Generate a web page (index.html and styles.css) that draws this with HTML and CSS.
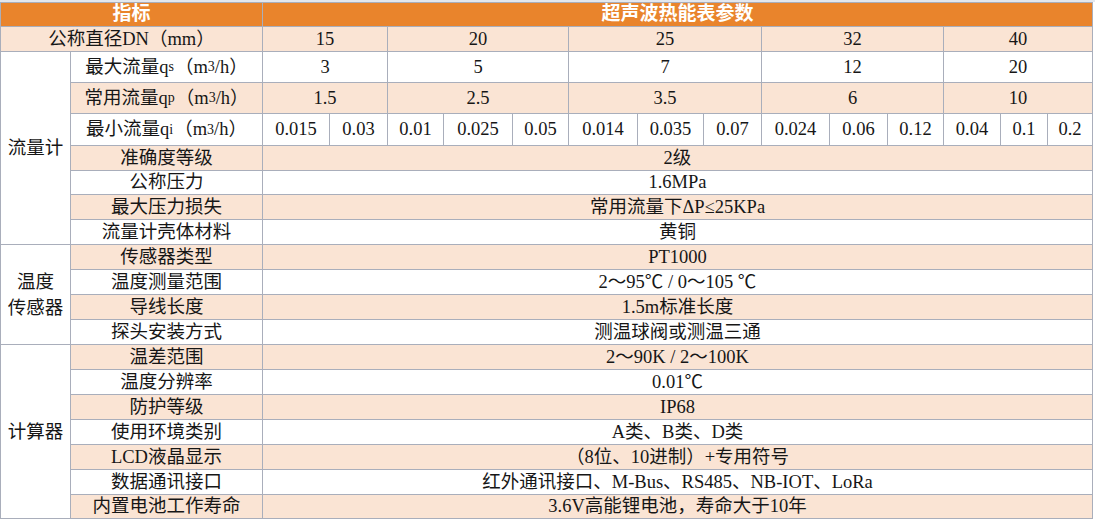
FILE: index.html
```html
<!DOCTYPE html>
<html lang="zh-CN">
<head>
<meta charset="utf-8">
<title>超声波热能表参数</title>
<link rel="stylesheet" href="styles.css">
</head>
<body>
<div class="sheet-top"></div>
<div class="sheet">
  <div class="cell head lab-full">指标</div>
  <div class="cell head val-full">超声波热能表参数</div>

  <div class="cell peach lab-full">公称直径DN（mm）</div>
  <div class="cell peach s2">15</div>
  <div class="cell peach s3">20</div>
  <div class="cell peach s3">25</div>
  <div class="cell peach s3">32</div>
  <div class="cell peach s3">40</div>

  <div class="cell grp span7">流量计</div>
  <div class="cell lab">最大流量q<sub>s</sub>（m<sup>3</sup>/h）</div>
  <div class="cell s2">3</div>
  <div class="cell s3">5</div>
  <div class="cell s3">7</div>
  <div class="cell s3">12</div>
  <div class="cell s3">20</div>

  <div class="cell peach lab">常用流量q<sub>p</sub>（m<sup>3</sup>/h）</div>
  <div class="cell peach s2">1.5</div>
  <div class="cell peach s3">2.5</div>
  <div class="cell peach s3">3.5</div>
  <div class="cell peach s3">6</div>
  <div class="cell peach s3">10</div>

  <div class="cell lab">最小流量q<sub>i</sub>（m<sup>3</sup>/h）</div>
  <div class="cell">0.015</div>
  <div class="cell">0.03</div>
  <div class="cell">0.01</div>
  <div class="cell">0.025</div>
  <div class="cell">0.05</div>
  <div class="cell">0.014</div>
  <div class="cell">0.035</div>
  <div class="cell">0.07</div>
  <div class="cell">0.024</div>
  <div class="cell">0.06</div>
  <div class="cell">0.12</div>
  <div class="cell">0.04</div>
  <div class="cell">0.1</div>
  <div class="cell">0.2</div>

  <div class="cell peach lab">准确度等级</div>
  <div class="cell peach val-full">2级</div>
  <div class="cell lab">公称压力</div>
  <div class="cell val-full">1.6MPa</div>
  <div class="cell peach lab">最大压力损失</div>
  <div class="cell peach val-full">常用流量下ΔP≤25KPa</div>
  <div class="cell lab">流量计壳体材料</div>
  <div class="cell val-full">黄铜</div>

  <div class="cell grp span4">温度<br>传感器</div>
  <div class="cell peach lab">传感器类型</div>
  <div class="cell peach val-full">PT1000</div>
  <div class="cell lab">温度测量范围</div>
  <div class="cell val-full">2～95℃ / 0～105 ℃</div>
  <div class="cell peach lab">导线长度</div>
  <div class="cell peach val-full">1.5m标准长度</div>
  <div class="cell lab">探头安装方式</div>
  <div class="cell val-full">测温球阀或测温三通</div>

  <div class="cell grp span7">计算器</div>
  <div class="cell peach lab">温差范围</div>
  <div class="cell peach val-full">2～90K / 2～100K</div>
  <div class="cell lab">温度分辨率</div>
  <div class="cell val-full">0.01℃</div>
  <div class="cell peach lab">防护等级</div>
  <div class="cell peach val-full">IP68</div>
  <div class="cell lab">使用环境类别</div>
  <div class="cell val-full">A类、B类、D类</div>
  <div class="cell peach lab">LCD液晶显示</div>
  <div class="cell peach val-full">（8位、10进制）+专用符号</div>
  <div class="cell lab">数据通讯接口</div>
  <div class="cell val-full">红外通讯接口、M-Bus、RS485、NB-IOT、LoRa</div>
  <div class="cell peach lab">内置电池工作寿命</div>
  <div class="cell peach val-full">3.6V高能锂电池，寿命大于10年</div>
</div>
</body>
</html>
```

FILE: styles.css
```css
html, body {
  margin: 0;
  padding: 0;
  background: #ffffff;
}

body {
  font-family: "Liberation Serif", "Noto Sans CJK SC", serif;
  font-size: 18.5px;
  color: #161616;
}

.sheet-top {
  height: 2px;
  background: #e3e7ee;
}

.sheet {
  display: grid;
  width: 1093px;
  box-sizing: border-box;
  padding: 1px;
  gap: 1px;
  background: #a9aebb;
  grid-template-columns: 69px 191px 66px 57px 55px 68px 55px 68px 65px 57px 67px 57px 55px 56px 46px 44px;
  grid-template-rows: 23px 24px 30px 30px 31px 24px 23px 24px 24px 24px 24px 24px 24px 24px 24px 24px 24px 24px 24px 23px;
}

.cell {
  display: flex;
  align-items: center;
  justify-content: center;
  text-align: center;
  white-space: nowrap;
  line-height: 1.2;
  background: #ffffff;
  overflow: hidden;
}

.peach {
  background: #fae4d4;
}

.head {
  background: #e9842c;
  color: #ffffff;
  font-weight: bold;
  font-size: 19px;
}

.lab-full {
  grid-column: 1 / 3;
}

.val-full {
  grid-column: 3 / -1;
}

.lab {
  grid-column: 2;
}

.s2 {
  grid-column: span 2;
}

.s3 {
  grid-column: span 3;
}

.grp {
  grid-column: 1;
  line-height: 26px;
}

.span7 {
  grid-row: span 7;
}

.span4 {
  grid-row: span 4;
}

sub, sup {
  font-size: 14px;
  line-height: 0;
}

sub {
  vertical-align: -5px;
  margin-right: 1px;
}

sup {
  vertical-align: 7px;
}
```
